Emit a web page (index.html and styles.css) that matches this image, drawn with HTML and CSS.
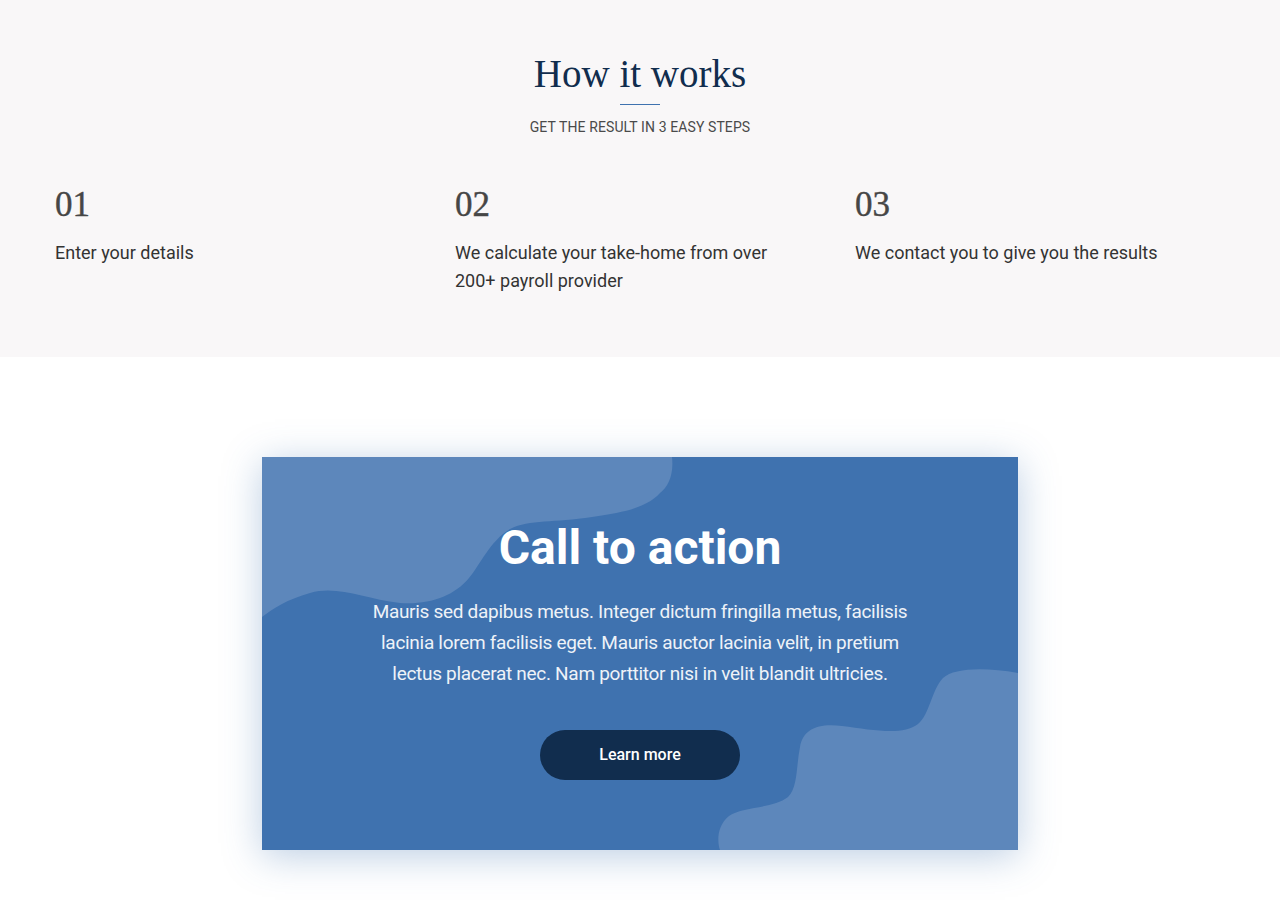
FILE: index.html
```html
<!DOCTYPE html>
<html lang="en">
<head>
<meta charset="utf-8">
<title>How it works</title>
<link rel="stylesheet" href="styles.css">
</head>
<body>
<section class="steps">
  <h2 class="steps-title">How it works</h2>
  <div class="steps-divider"></div>
  <p class="steps-subtitle">GET THE RESULT IN 3 EASY STEPS</p>
  <div class="steps-grid">
    <div class="step">
      <div class="step-num">01</div>
      <p class="step-text">Enter your details</p>
    </div>
    <div class="step">
      <div class="step-num">02</div>
      <p class="step-text">We calculate your take-home from over 200+ payroll provider</p>
    </div>
    <div class="step">
      <div class="step-num">03</div>
      <p class="step-text">We contact you to give you the results</p>
    </div>
  </div>
</section>
<section class="cta-wrap">
  <div class="cta">
    <svg class="cta-bg" viewBox="0 0 756 393" preserveAspectRatio="none" aria-hidden="true">
      <path class="blob" d="M0,0 H410 C412,18 406,30 398,36 C385,50 365,55 330,60 C292,66 268,62 248,72 C228,84 218,108 207,121 C192,139 168,148 138,146 C102,142 76,128 48,136 C26,142 10,152 0,160 Z"/>
      <path class="blob" d="M756,216 C722,210 692,211 681,221 C669,234 668,257 656,267 C641,279 611,273 580,269 C556,266 541,272 538,290 C534,310 536,330 526,340 C511,352 481,349 467,359 C455,369 455,384 458,393 H756 Z"/>
    </svg>
    <div class="cta-content">
      <h2 class="cta-title">Call to action</h2>
      <p class="cta-text">Mauris sed dapibus metus. Integer dictum fringilla metus, facilisis lacinia lorem facilisis eget. Mauris auctor lacinia velit, in pretium lectus placerat nec. Nam porttitor nisi in velit blandit ultricies.</p>
      <a class="cta-button" href="#">Learn more</a>
    </div>
  </div>
</section>
</body>
</html>
```
FILE: styles.css
```css
* { box-sizing: border-box; }
html, body { margin: 0; padding: 0; }
body {
  background: #ffffff;
  font-family: Roboto, "Liberation Sans", sans-serif;
  color: #333333;
}
.steps {
  background: #f9f7f8;
  padding: 50px 0 62px;
  text-align: center;
}
.steps-title {
  margin: 0;
  font-family: "Liberation Serif", "DejaVu Serif", serif;
  font-weight: 400;
  font-size: 39px;
  line-height: 48px;
  color: #112d4e;
}
.steps-divider {
  width: 40px;
  height: 1px;
  background: #3f72af;
  margin: 6px auto 0;
}
.steps-subtitle {
  margin: 12px 0 0;
  font-size: 14px;
  line-height: 20px;
  letter-spacing: 0.1px;
  color: #4a4a4a;
}
.steps-grid {
  width: 1200px;
  margin: 46px auto 0;
  display: grid;
  grid-template-columns: repeat(3, 1fr);
  text-align: left;
}
.step { padding: 0 15px; }
.step-num {
  font-family: "Liberation Serif", "DejaVu Serif", serif;
  font-size: 35px;
  line-height: 43px;
  color: #464646;
  -webkit-text-stroke: 0.4px #464646;
}
.step-text {
  margin: 13px 0 0;
  max-width: 340px;
  font-size: 18px;
  line-height: 28px;
  color: #333333;
}
.cta-wrap {
  padding: 100px 0 70px;
}
.cta {
  position: relative;
  width: 756px;
  height: 393px;
  margin: 0 auto;
  background: #3f72af;
  box-shadow: 0 6px 36px rgba(63, 114, 175, 0.35);
  overflow: hidden;
}
.cta-bg {
  position: absolute;
  left: 0;
  top: 0;
  width: 100%;
  height: 100%;
}
.blob { fill: #5d87bb; }
.cta-content {
  position: relative;
  display: flex;
  flex-direction: column;
  align-items: center;
  padding-top: 62px;
  text-align: center;
}
.cta-title {
  margin: 0;
  font-size: 48px;
  line-height: 58px;
  font-weight: 700;
  color: #ffffff;
}
.cta-text {
  margin: 19px 0 0;
  max-width: 560px;
  font-size: 19px;
  line-height: 31px;
  letter-spacing: -0.3px;
  color: #eef2f8;
}
.cta-button {
  margin-top: 41px;
  width: 200px;
  height: 50px;
  border-radius: 25px;
  background: #112d4e;
  color: #ffffff;
  font-size: 16px;
  font-weight: 500;
  line-height: 50px;
  text-decoration: none;
}
```
